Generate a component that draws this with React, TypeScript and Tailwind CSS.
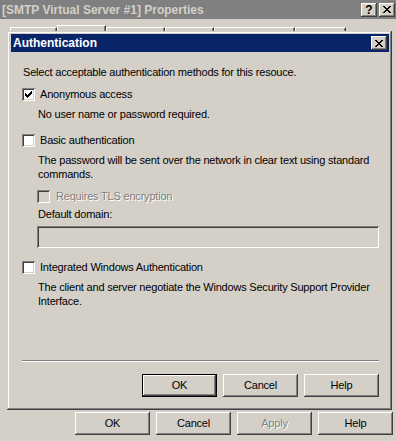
import React from "react";

const raised =
  "shadow-[inset_-1px_-1px_#404040,inset_1px_1px_#ffffff,inset_-2px_-2px_#808080,inset_2px_2px_#d4d0c8]";
const sunken =
  "shadow-[inset_1px_1px_#808080,inset_-1px_-1px_#ffffff,inset_2px_2px_#404040,inset_-2px_-2px_#d4d0c8]";

function XGlyph() {
  return (
    <svg width="8" height="7" viewBox="0 0 8 7" shapeRendering="crispEdges">
      <path
        d="M0 0h2v1H0zM6 0h2v1H6zM1 1h2v1H1zM5 1h2v1H5zM2 2h4v1H2zM3 3h2v1H3zM2 4h4v1H2zM1 5h2v1H1zM5 5h2v1H5zM0 6h2v1H0zM6 6h2v1H6z"
        fill="#000"
      />
    </svg>
  );
}

function Check() {
  return (
    <svg width="7" height="7" viewBox="0 0 7 7" shapeRendering="crispEdges">
      <path
        d="M6 0h1v1H6zM5 1h2v1H5zM0 2h1v1H0zM4 2h3v1H4zM0 3h2v1H0zM3 3h3v1H3zM0 4h5v1H0zM1 5h3v1H1zM2 6h1v1H2z"
        fill="#000"
      />
    </svg>
  );
}

function Checkbox({ checked, disabled }: { checked?: boolean; disabled?: boolean }) {
  return (
    <div
      className={`w-[13px] h-[13px] shrink-0 flex items-center justify-center ${sunken} ${
        disabled ? "bg-[#d4d0c8]" : "bg-white"
      }`}
    >
      {checked && <Check />}
    </div>
  );
}

function Button({
  label,
  isDefault,
  disabled,
}: {
  label: string;
  isDefault?: boolean;
  disabled?: boolean;
}) {
  const inner = (
    <div
      className={`flex-1 self-stretch flex items-center justify-center bg-[#d4d0c8] ${raised}`}
    >
      <span
        className={
          disabled
            ? "text-[#808080] [text-shadow:1px_1px_0_#ffffff]"
            : "text-black"
        }
      >
        {label}
      </span>
    </div>
  );
  return (
    <div
      className={`w-[75px] h-[23px] flex ${
        isDefault ? "border border-black" : ""
      }`}
    >
      {inner}
    </div>
  );
}

function Tab({ w, selected }: { w: number; selected?: boolean }) {
  return (
    <div
      style={{ width: w }}
      className={`border-t border-l border-t-white border-l-white shadow-[inset_-1px_0_#808080] border-r border-r-[#404040] ${
        selected ? "h-[7px]" : "h-[5px]"
      }`}
    />
  );
}

export default function App() {
  return (
    <div className="relative w-[396px] h-[441px] overflow-hidden bg-[#d4d0c8] font-['Liberation_Sans',Arial,sans-serif] text-[11px] tracking-[-0.2px] text-black flex flex-col">
      {/* outer title bar */}
      <div className="h-[19px] bg-[#808080] flex items-center pl-[2px] pr-[1px]">
        <span className="text-[12px] font-bold tracking-normal text-[#d4d0c8] leading-none">
          [SMTP Virtual Server #1] Properties
        </span>
        <div className="ml-auto flex gap-[2px]">
          <div className={`w-[16px] h-[14px] bg-[#d4d0c8] ${raised} flex items-center justify-center`}>
            <span className="text-[12px] font-bold leading-none text-black tracking-normal">?</span>
          </div>
          <div className={`w-[16px] h-[14px] bg-[#d4d0c8] ${raised} flex items-center justify-center`}>
            <XGlyph />
          </div>
        </div>
      </div>

      {/* tab strip */}
      <div className="mt-[6px] h-[7px] flex items-end pl-[10px]">
        <Tab w={47} />
        <Tab w={49} selected />
        <Tab w={59} />
        <Tab w={49} />
        <Tab w={81} />
        <Tab w={51} />
      </div>

      <div className="flex-1" />

      {/* outer buttons */}
      <div className="flex justify-end gap-[6px] pr-[3px] pb-[6px]">
        <Button label="OK" />
        <Button label="Cancel" />
        <Button label="Apply" disabled />
        <Button label="Help" />
      </div>

      {/* Authentication dialog */}
      <div
        className={`absolute left-[7px] top-[31px] w-[385px] h-[379px] bg-[#d4d0c8] shadow-[inset_-1px_-1px_#404040,inset_1px_1px_#d4d0c8,inset_-2px_-2px_#808080,inset_2px_2px_#ffffff] pt-[3px] pl-[4px] pr-[3px] pb-[2px] flex flex-col`}
      >
        <div className="h-[18px] bg-[#0a246a] flex items-center pl-[2px] pr-[2px]">
          <span className="text-[12px] font-bold tracking-normal text-white leading-none">
            Authentication
          </span>
          <div className={`ml-auto w-[16px] h-[14px] bg-[#d4d0c8] ${raised} flex items-center justify-center`}>
            <XGlyph />
          </div>
        </div>

        <div className="flex-1 flex flex-col pl-[11px] pr-[10px] pb-[11px]">
          <div className="mt-[14px] leading-[13px] pl-[1px]">
            Select acceptable authentication methods for this resouce.
          </div>

          <div className="mt-[9px] flex items-center gap-[5px] leading-[13px]">
            <Checkbox checked />
            <span>Anonymous access</span>
          </div>
          <div className="mt-[7px] pl-[16px] leading-[13px]">
            No user name or password required.
          </div>

          <div className="mt-[13px] flex items-center gap-[5px] leading-[13px]">
            <Checkbox />
            <span>Basic authentication</span>
          </div>
          <div className="mt-[6px] pl-[16px] leading-[14px]">
            The password will be sent over the network in clear text using standard
            <br />
            commands.
          </div>

          <div className="mt-[9px] pl-[15px] flex items-center gap-[6px] leading-[13px]">
            <Checkbox disabled />
            <span className="text-[#808080] [text-shadow:1px_1px_0_#ffffff]">
              Requires TLS encryption
            </span>
          </div>
          <div className="mt-[5px] pl-[16px] leading-[13px]">Default domain:</div>
          <div className="mt-[5px] ml-[15px] h-[22px] bg-[#d4d0c8]">
            <div className={`w-full h-full ${sunken}`} />
          </div>

          <div className="mt-[13px] flex items-center gap-[5px] leading-[13px]">
            <Checkbox />
            <span>Integrated Windows Authentication</span>
          </div>
          <div className="mt-[6px] pl-[16px] leading-[14px]">
            The client and server negotiate the Windows Security Support Provider
            <br />
            Interface.
          </div>

          <div className="flex-1" />

          <div className="h-[2px] border-t border-t-[#808080] border-b border-b-white" />

          <div className="mt-[12px] flex justify-end gap-[6px]">
            <Button label="OK" isDefault />
            <Button label="Cancel" />
            <Button label="Help" />
          </div>
        </div>
      </div>
    </div>
  );
}
